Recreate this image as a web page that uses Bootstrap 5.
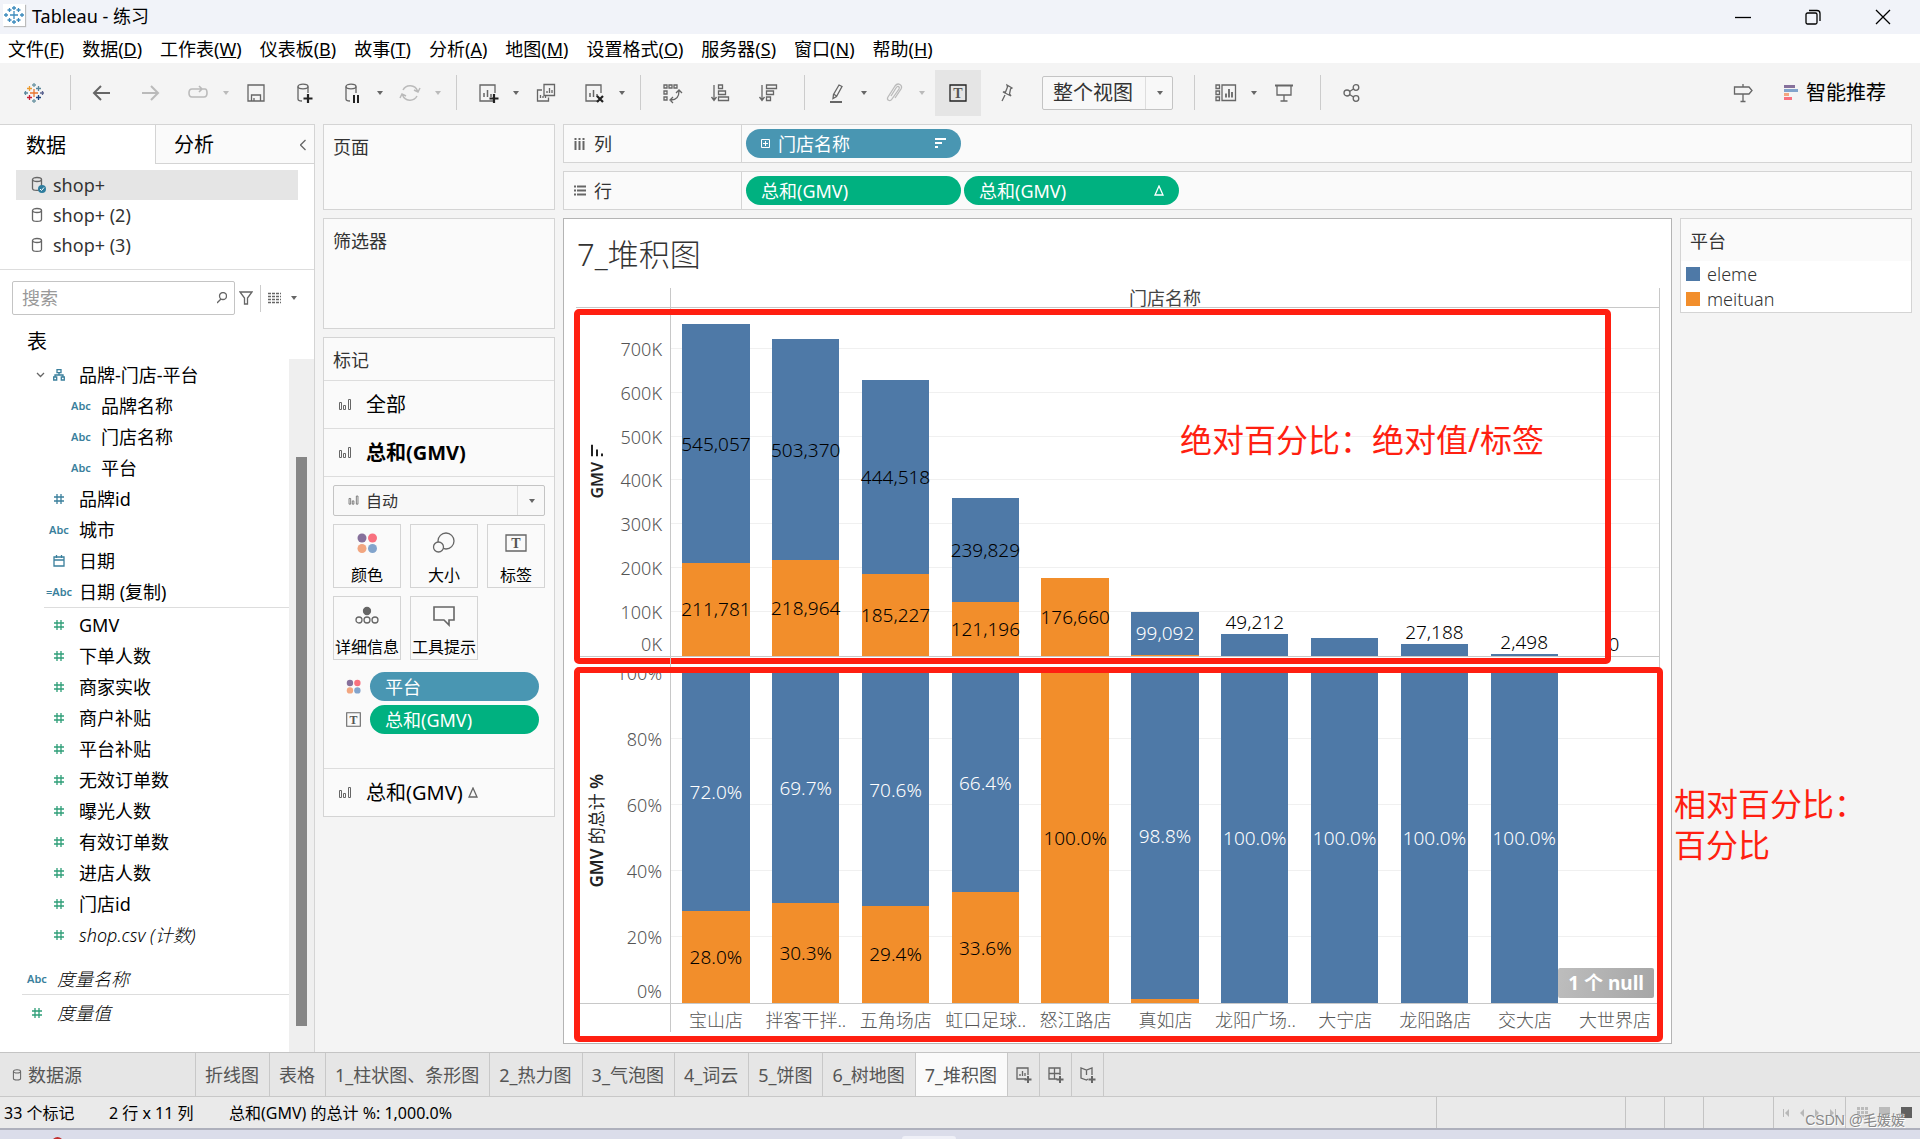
<!DOCTYPE html>
<html lang="zh-CN">
<head>
<meta charset="utf-8">
<meta name="viewport" content="width=device-width, initial-scale=1">
<title>Tableau - 练习</title>
<link rel="stylesheet" href="https://cdn.jsdelivr.net/npm/bootstrap@5.3.0/dist/css/bootstrap.min.css">
<style>
:root{--line:#d4d4d4;--blue:#4e79a7;--orange:#f28e2b;--dim:#4996b2;--mea:#00b180;--red:#ff1f11}
body{font-family:"Noto Sans","Noto Sans CJK SC",sans-serif;font-size:18px;line-height:24px;color:#000;background:#f4f4f4;overflow-x:hidden}
a{color:inherit;text-decoration:none}
button{background:none;border:0;padding:0;color:inherit}
svg{display:block;flex:none;fill:none;stroke:#666;stroke-width:1.3}
svg text{stroke:none;fill:#555;font-family:"Liberation Serif",serif;font-weight:bold;text-anchor:middle}
.i24{width:24px;height:24px}.i16{width:16px;height:16px}
.caret{width:10px;height:6px;fill:#666;stroke:none}
.off{opacity:.4}
/* window chrome */
.titlebar{height:34px;background:#f1f3f9;padding-left:3px;padding-right:2px;gap:7px;padding-bottom:6px}
.appicon{background:#fff;box-shadow:1px 1px 1px #bbb}
.wbtn{width:70px;height:34px}
.wbtn svg{stroke:#000}
.menubar{height:29px;background:#fff;padding:0 8px;gap:18px}
.toolbar-main{height:61px;padding:7px 18px 9px 11px;gap:2px}
.toolbar-main>.caret{margin-left:-2px}
.tb{width:46px;height:46px;display:flex;align-items:center;justify-content:center}
.tb.pressed{background:#e5e5e5;margin-left:6px}
.vsep{width:1px;height:35px;background:#ccc;margin:0 6px 0 11px}
.fit{width:131px;height:34px;margin:0 8px 0 11px}
.plainselect{appearance:none;width:100%;height:100%;border:1px solid #c4c4c4;border-radius:2px;background:#f8f8f8;color:#333;outline:0}
.fit select{font-size:20px;padding:0 32px 0 10px}
.selcaret{position:absolute;right:0;top:1px;bottom:1px;width:28px;border-left:1px solid #ddd;display:flex;align-items:center;justify-content:center;pointer-events:none}
/* data pane */
.datapane{width:315px;background:#fff;border-top:1px solid var(--line);border-right:1px solid var(--line);flex:none}
.ptab{height:39px;font-size:20px;padding-top:2px}
.ptab.rest{background:#fafafa;border-left:1px solid var(--line);border-bottom:1px solid var(--line);padding-left:18px}
.sources{padding:6px 16px 9px;border-bottom:1px solid #ddd;color:#333}
.sources a{height:30px;padding-left:13px;gap:6px}
.sources a.on{background:#e5e5e5}
.searchbox{width:223px;height:34px;border:1px solid #c4c4c4;border-radius:2px}
.searchbox input{border:0;outline:0;background:none;padding:0 0 0 9px;width:204px}
.searchbox input::placeholder{color:#999}
.tree a{height:31px;padding-left:44px}
.tree a.sub{padding-left:66px}
.tree a.top{padding-left:22px}
.ft{width:30px;margin-right:5px;display:flex;justify-content:center;font-size:11px;font-weight:600;color:#3a7f9c;flex:none}
.ft svg{stroke:#3a7f9c}
.ft.g svg{stroke:#2f9e78}
.scroller{width:25px;background:#efefef;padding:98px 7px 26px}
.thumb{background:#868686;height:100%;width:11px}
/* cards */
.shelfcol{width:232px;flex:none;gap:8px}
.pane{border:1px solid var(--line);background:#fafafa;color:#333}
.pane .cap{padding:10px 9px}
.mrow{height:48px;border-top:1px solid #ddd;font-size:20px;padding-left:13px;gap:13px;color:#000}
.markbtn{height:64px;border:1px solid var(--line);background:#fafafa;font-size:16px;color:#000;display:flex;flex-direction:column;align-items:center;justify-content:space-between;padding:6px 0 0;white-space:nowrap}
.pill{border-radius:15px;height:29px;color:#fff;background:var(--mea);padding:0 15px;display:flex;align-items:center}
.pill.dim{background:var(--dim)}
.pill svg{stroke:#fff}
.shelf{height:39px;padding-left:10px}
.shelf .nm{width:168px;border-right:1px solid var(--line)}
.shelf .pill{width:215px}
/* worksheet */
.sheet{background:#fff;border:1px solid #b4b4b4;padding:0 11px 7px 12px}
.sheet h1{font-size:31px;font-weight:300;line-height:40px;margin:0;padding:15px 0 14px 1px;color:#333}
.axis{width:95px;border-right:1px solid #c8c8c8;flex:none;color:#777}
.colhead{height:20px;border-bottom:1px solid #c8c8c8;border-right:1px solid #c8c8c8;color:#444}
.plot{min-height:200px;flex:1 1 0;border-bottom:1px solid #c8c8c8}
.area{border-right:1px solid #c8c8c8}
.tick{position:absolute;right:8px;transform:translateY(50%);font-weight:300;color:#555}
.grid{position:absolute;left:0;right:0;height:1px;background:#f0f0f0}
.yname{position:absolute;left:9px;top:0;bottom:0;display:flex;align-items:center;justify-content:center;writing-mode:vertical-rl;text-orientation:sideways;transform:rotate(180deg);font-size:17px;color:#222;gap:5px}
.yname b{font-weight:600}
.yname.sorted{padding-top:20px;font-size:16px}
.slot{flex:1 1 0;display:flex;flex-direction:column;justify-content:flex-end;align-items:center;position:relative}
.seg{width:75%;display:flex;align-items:center;justify-content:center;font-size:19px;font-weight:300;flex:none;white-space:nowrap}
.seg.e{background:var(--blue)}.seg.m{background:var(--orange)}
.seg.w{color:#fff}
.over{font-size:19px;font-weight:300}
.xl{flex:1 1 0;text-align:center;font-weight:300;color:#555;white-space:nowrap}
.frame{position:absolute;border:6px solid var(--red);border-radius:5px;pointer-events:none}
.frame.one{left:-2px;right:49px;top:1px;bottom:-8px}
.frame.two{left:-2px;right:-3px;top:10px;bottom:-6px}
.note{position:absolute;font-size:32px;line-height:41px;color:var(--red);white-space:nowrap}
.note.one{right:116px;top:32%}
.note.two{left:-6px;top:565px}
.nullbox{position:absolute;right:5px;bottom:5px;height:30px;padding:0 10px;border-radius:2px;color:#fff;font-size:19px;font-weight:700;background:linear-gradient(100deg,#bdbdbd,#a6a6a6)}
.legendcol{width:232px;flex:none}
.sw{width:14px;height:14px}
.lg{height:25px;gap:7px;padding-left:5px}
/* bottom */
.tabsbar{height:45px;background:#e6e6e6;border-top:1px solid #c4c4c4;border-bottom:1px solid #c8c8c8;color:#555}
.tabsbar a{border-right:1px solid #c8c8c8;padding:0 10px 0 9px;display:flex;align-items:center}
.tabsbar a.on{background:#fafafa}
.tabsbar a.src{width:196px;gap:3px}
.tabsbar a.add{width:32px;padding:0;justify-content:center}
.statusbar{height:31px;background:#eaeaea;font-size:16px}
.statusbar .cell{border-left:1px solid #c4c4c4;height:100%}
.csdn{position:absolute;right:15px;bottom:-4px;color:#888;font-family:"Liberation Sans","Noto Sans CJK SC",sans-serif;text-shadow:1px 1px 0 #fff;font-size:14px}
.taskbar{height:11px;background:#dbddea;border-top:2px solid #aeb0bc}
.taskbar i{position:absolute;display:block}
</style>
<script src="https://cdn.jsdelivr.net/npm/bootstrap@5.3.0/dist/js/bootstrap.bundle.min.js"></script>
</head>
<body class="d-flex flex-column min-vh-100">
<svg width="0" height="0" class="position-absolute">
<defs>
<symbol id="db" viewBox="0 0 16 16"><path d="M3.500 3.500v9c0 2.500 9 2.500 9 0v-9"/><ellipse cx="8" cy="3.500" rx="4.500" ry="2"/></symbol>
<symbol id="hash" viewBox="0 0 16 16"><path d="M6 3v10M10 3v10M3 6h10M3 10h10"/></symbol>
<symbol id="bars" viewBox="0 0 16 16"><path stroke-width="1" d="M2.500 5.500h2v7h-2zM6.500 8.500h2v4h-2zM11.500 2.500h2v10h-2z"/></symbol>
<symbol id="dn" viewBox="0 0 10 6"><path d="M2 1h6L5 5z"/></symbol>
<symbol id="tbox" viewBox="0 0 24 24"><path d="M4 4h16v16H4z"/><text x="12" y="17" font-size="14">T</text></symbol>
<symbol id="dots" viewBox="0 0 24 24"><g stroke="none"><circle cx="7" cy="7" r="4.500" fill="#86709b"/><circle cx="17.500" cy="7" r="4.500" fill="#f8717f"/><circle cx="7" cy="17.500" r="4.500" fill="#f2a680"/><circle cx="17.500" cy="17.500" r="4.500" fill="#82a4cc"/></g></symbol>
<symbol id="chartbox" viewBox="0 0 24 24"><path d="M17 20H4V4h15v8"/><path d="M8 16v-4M11.500 16V9M15 16v-3" stroke-width="1.500"/></symbol>
</defs>
</svg>

<header>
<div class="titlebar d-flex">
 <svg class="appicon mt-1" width="22" height="22" viewBox="0 0 22 22"><path style="stroke:#3d8bbd" d="M11 7v8M7 11h8M11 2v4M9 4h4M11 16v4M9 18h4M3 9v4M1 11h4M19 9v4M17 11h4M6.500 4v4M4.500 6h4M15.500 4v4M13.500 6h4M6.500 14v4M4.500 16h4M15.500 14v4M13.500 16h4"/></svg>
 <span class="mt-1">Tableau - 练习</span>
 <div class="ms-auto d-flex">
  <button class="wbtn" aria-label="最小化"><svg class="m-auto" width="16" height="16"><path d="M0 8.500h16"/></svg></button>
  <button class="wbtn" aria-label="还原"><svg class="m-auto" width="16" height="16"><rect x="1" y="4" width="11" height="11" rx="1.500"/><path d="M4 1.500h8q3 0 3 3V12"/></svg></button>
  <button class="wbtn" aria-label="关闭"><svg class="m-auto" width="16" height="16"><path d="M1 1l14 14M15 1L1 15"/></svg></button>
 </div>
</div>
<nav class="menubar d-flex align-items-center">
 <a href="#">文件(<u>F</u>)</a><a href="#">数据(<u>D</u>)</a><a href="#">工作表(<u>W</u>)</a><a href="#">仪表板(<u>B</u>)</a><a href="#">故事(<u>T</u>)</a><a href="#">分析(<u>A</u>)</a><a href="#">地图(<u>M</u>)</a><a href="#">设置格式(<u>O</u>)</a><a href="#">服务器(<u>S</u>)</a><a href="#">窗口(<u>N</u>)</a><a href="#">帮助(<u>H</u>)</a>
</nav>
<div class="toolbar-main d-flex align-items-center">
 <button class="tb" aria-label="Tableau"><svg class="i24" viewBox="0 0 24 24"><path style="stroke:#e8762d" d="M12 8v8M8 12h8"/><path style="stroke:#eb9a2d" d="M7.500 5v5M5 7.500h5"/><path style="stroke:#5b879b" d="M16.500 5v5M14 7.500h5M3.500 10v4M2 12h4"/><path style="stroke:#c72035" d="M7.500 14v5M5 16.500h5"/><path style="stroke:#1f457e" d="M16.500 14v5M14 16.500h5"/><path style="stroke:#7199a6" d="M12 2v4M10 4h4M12 18v4M10 20h4"/><path style="stroke:#5c6591" d="M20.500 10v4M18 12h4"/></svg></button>
 <span class="vsep"></span>
 <button class="tb" aria-label="后退"><svg class="i24" viewBox="0 0 24 24"><path d="M20 12H5M11 5l-7 7 7 7" stroke-width="2"/></svg></button>
 <button class="tb off" aria-label="前进"><svg class="i24" viewBox="0 0 24 24"><path d="M4 12h15M13 5l7 7-7 7" stroke-width="2"/></svg></button>
 <button class="tb off" aria-label="重做"><svg class="i24" viewBox="0 0 24 24"><path d="M16 8H6q-3 0-3 4t3 4h12q3 0 3-4t-2-4h-3M13 5l3 3-3 3" stroke-width="1.600"/></svg></button><svg class="caret off"><use href="#dn"/></svg>
 <button class="tb" aria-label="保存"><svg class="i24" viewBox="0 0 24 24"><path d="M4 4h16v16H4zM7.500 20v-6h9v6M10 20v-3"/></svg></button>
 <button class="tb" aria-label="新建数据源"><svg class="i24" viewBox="0 0 24 24"><ellipse cx="11" cy="5.500" rx="5" ry="2.300"/><path d="M6 5.500V18q0 2 4 2M16 5.500V12"/><path d="M16 13v9M11.500 17.500h9" stroke-width="2.200" style="stroke:#222"/></svg></button>
 <button class="tb" aria-label="暂停自动更新"><svg class="i24" viewBox="0 0 24 24"><ellipse cx="11" cy="5.500" rx="5" ry="2.300"/><path d="M6 5.500V18q0 2 4 2M16 5.500V12"/><path d="M14 14v8M18 14v8" stroke-width="2" style="stroke:#222"/></svg></button><svg class="caret"><use href="#dn"/></svg>
 <button class="tb off" aria-label="运行更新"><svg class="i24" viewBox="0 0 24 24"><path d="M5 9a8 8 0 0 1 14.500 1M19 15a8 8 0 0 1-14.500-1M22 7l-2 4-4-2M2 17l2-4 4 2" stroke-width="1.500"/></svg></button><svg class="caret off"><use href="#dn"/></svg>
 <span class="vsep"></span>
 <button class="tb" aria-label="新建工作表"><svg class="i24" viewBox="0 0 24 24"><use href="#chartbox"/><path d="M18 13v9M13.500 17.500h9" stroke-width="2.200" style="stroke:#222"/></svg></button><svg class="caret"><use href="#dn"/></svg>
 <button class="tb" aria-label="复制"><svg class="i24" viewBox="0 0 24 24"><path d="M10 3.500h10.500v11H10zM8 9H3.500v11h11v-3.500M13 12v-2M15.500 12V7M18 12V9M6.500 17v-3M9 17v-2M11.500 17v-2"/></svg></button>
 <button class="tb" aria-label="清除工作表"><svg class="i24" viewBox="0 0 24 24"><use href="#chartbox"/><path d="M15 15l6 6M21 15l-6 6" stroke-width="2.200" style="stroke:#222"/></svg></button><svg class="caret"><use href="#dn"/></svg>
 <span class="vsep"></span>
 <button class="tb" aria-label="交换行和列"><svg class="i24" viewBox="0 0 24 24"><path d="M4 4h3v3H4zM9 4h3v3H9zM14 4h3v3h-3zM4 10h3v3H4zM4 16h3v3H4zM19 10q0 9-8 9M16 12l3-3 3 3M13 16l-3 3 3 3"/></svg></button>
 <button class="tb" aria-label="升序排序"><svg class="i24" viewBox="0 0 24 24"><path d="M6 4v15M3.500 16L6 19.500 8.500 16M10.500 4h4v3.500h-4zM10.500 10h7v3.500h-7zM10.500 16h10v3.500h-10z"/></svg></button>
 <button class="tb" aria-label="降序排序"><svg class="i24" viewBox="0 0 24 24"><path d="M6 4v15M3.500 16L6 19.500 8.500 16M10.500 4h10v3.500h-10zM10.500 10h7v3.500h-7zM10.500 16h4v3.500h-4z"/></svg></button>
 <span class="vsep"></span>
 <button class="tb" aria-label="突出显示"><svg class="i24" viewBox="0 0 24 24"><path d="M15 4l3 1.500-5.500 10-3.500 2 .5-4zM9.500 13l3 2"/><path d="M6 21h12" stroke-width="2"/></svg></button><svg class="caret"><use href="#dn"/></svg>
 <button class="tb off" aria-label="组成员"><svg class="i24" viewBox="0 0 24 24"><path d="M9 15l5-8c2-3 4-1 3 1l-7 10c-2 3-6 1-4-2l7-11c3-4 8-1 6 3l-6 9"/></svg></button><svg class="caret off"><use href="#dn"/></svg>
 <button class="tb pressed" aria-label="显示标记标签"><svg class="i24" viewBox="0 0 24 24" style="stroke:#222"><use href="#tbox"/></svg></button>
 <button class="tb" aria-label="固定"><svg class="i24" viewBox="0 0 24 24"><path d="M13 4l5 3-1.500 1-1 5 1.500 2-8-4h2.500l2-5zM11 14l-3 6"/></svg></button>
 <div class="fit position-relative"><select class="plainselect" aria-label="适应"><option>整个视图</option></select><span class="selcaret"><svg class="caret"><use href="#dn"/></svg></span></div>
 <span class="vsep"></span>
 <button class="tb" aria-label="显示/隐藏卡"><svg class="i24" viewBox="0 0 24 24"><path d="M2 4h3.500v3.500H2zM2 10h3.500v3.500H2zM2 16h3.500v3.500H2zM8 4h13.500v15.500H8z"/><path d="M12 16.500v-4M15 16.500V8M18 16.500V11" stroke-width="1.800"/></svg></button><svg class="caret"><use href="#dn"/></svg>
 <button class="tb" aria-label="演示模式"><svg class="i24" viewBox="0 0 24 24"><path d="M3 4.500h18" stroke-width="2"/><path d="M5 5v9h14V5M12 14v6M8.500 20h7"/></svg></button>
 <span class="vsep"></span>
 <button class="tb" aria-label="共享"><svg class="i24" viewBox="0 0 24 24"><circle cx="7" cy="12" r="3"/><circle cx="16" cy="6.500" r="2.800"/><circle cx="16" cy="17.500" r="2.800"/><path d="M9.500 10.500l4-2.500M9.500 13.500l4 2.500"/></svg></button>
 <button class="tb ms-auto" aria-label="指南"><svg class="i24" viewBox="0 0 24 24"><path d="M3.500 6H18l3 3.500-3 3.500H3.500zM12 3v3M12 13v7M9.500 20.500h5"/></svg></button>
 <button class="d-flex align-items-center ps-3 pe-3" style="font-size:20px"><svg width="14" height="16" style="stroke:none" class="me-2"><path fill="#86709b" d="M0 0h11v3H0z"/><path fill="#82a4cc" d="M0 4h14v3H0z"/><path fill="#f2a680" d="M0 8h5v3H0z"/><path fill="#f8717f" d="M0 12h8v3H0z"/></svg>智能推荐</button>
</div>
</header>

<main class="d-flex flex-grow-1">
<aside class="datapane d-flex flex-column">
 <div class="d-flex"><a href="#" class="ptab d-flex align-items-center" style="flex:0 0 155px;padding-left:26px">数据</a><a href="#" class="ptab rest d-flex flex-fill align-items-center justify-content-between pe-2">分析<svg width="6" height="12"><path d="M5.500 1l-5 5 5 5"/></svg></a></div>
 <div class="sources">
  <a href="#" class="on d-flex align-items-center"><svg width="18" height="18" viewBox="0 0 18 18"><use href="#db" width="16" height="16"/><circle cx="13" cy="13" r="4" fill="#2f7d9e" stroke="none"/><path d="M11 13l1.500 1.500 2.500-3" style="stroke:#fff" stroke-width="1"/></svg>shop+</a>
  <a href="#" class="d-flex align-items-center"><svg width="18" height="16"><use href="#db" width="16" height="16"/></svg>shop+ (2)</a>
  <a href="#" class="d-flex align-items-center"><svg width="18" height="16"><use href="#db" width="16" height="16"/></svg>shop+ (3)</a>
 </div>
 <div class="d-flex align-items-center" style="padding:11px 0 0 12px">
  <label class="searchbox d-flex align-items-center"><input type="text" placeholder="搜索" aria-label="搜索"><svg width="10" height="12"><circle cx="6" cy="4" r="3.500"/><path d="M4 7l-4 4"/></svg></label>
  <svg class="ms-1" width="14" height="14"><path d="M1 1h12L8.500 7v6h-3V7z"/></svg>
  <span class="vsep" style="height:27px;margin:0 7px"></span>
  <svg width="13" height="12"><path stroke-dasharray="3 1" d="M0 1.500h13M0 4.500h13M0 7.500h13M0 10.500h13"/></svg>
  <svg class="caret ms-2"><use href="#dn"/></svg>
 </div>
 <div style="font-size:20px;padding:15px 27px 5px">表</div>
 <div class="d-flex flex-grow-1">
  <div class="tree flex-fill">
   <a href="#" class="d-flex align-items-center position-relative"><svg class="position-absolute" style="left:36px" width="9" height="8"><path d="M1 2l3.500 3.500L8 2"/></svg><span class="ft"><svg width="12" height="12"><path d="M4 .7h4v3H4zM.7 8h3v3h-3zM8.300 8h3v3h-3zM6 4v2M2 8V6h8v2"/></svg></span>品牌-门店-平台</a>
   <a href="#" class="sub d-flex align-items-center"><span class="ft">Abc</span>品牌名称</a>
   <a href="#" class="sub d-flex align-items-center"><span class="ft">Abc</span>门店名称</a>
   <a href="#" class="sub d-flex align-items-center"><span class="ft">Abc</span>平台</a>
   <a href="#" class="d-flex align-items-center"><span class="ft"><svg class="i16"><use href="#hash"/></svg></span>品牌id</a>
   <a href="#" class="d-flex align-items-center"><span class="ft">Abc</span>城市</a>
   <a href="#" class="d-flex align-items-center"><span class="ft"><svg width="12" height="12"><path d="M1 2h10v9H1zM1 5h10M3.500 0v3M8.500 0v3"/></svg></span>日期</a>
   <a href="#" class="d-flex align-items-center"><span class="ft">=Abc</span>日期 (复制)</a>
   <div style="margin-left:44px;border-top:1px solid #ddd;padding-bottom:1px"></div>
   <a href="#" class="d-flex align-items-center"><span class="ft g"><svg class="i16"><use href="#hash"/></svg></span>GMV</a>
   <a href="#" class="d-flex align-items-center"><span class="ft g"><svg class="i16"><use href="#hash"/></svg></span>下单人数</a>
   <a href="#" class="d-flex align-items-center"><span class="ft g"><svg class="i16"><use href="#hash"/></svg></span>商家实收</a>
   <a href="#" class="d-flex align-items-center"><span class="ft g"><svg class="i16"><use href="#hash"/></svg></span>商户补贴</a>
   <a href="#" class="d-flex align-items-center"><span class="ft g"><svg class="i16"><use href="#hash"/></svg></span>平台补贴</a>
   <a href="#" class="d-flex align-items-center"><span class="ft g"><svg class="i16"><use href="#hash"/></svg></span>无效订单数</a>
   <a href="#" class="d-flex align-items-center"><span class="ft g"><svg class="i16"><use href="#hash"/></svg></span>曝光人数</a>
   <a href="#" class="d-flex align-items-center"><span class="ft g"><svg class="i16"><use href="#hash"/></svg></span>有效订单数</a>
   <a href="#" class="d-flex align-items-center"><span class="ft g"><svg class="i16"><use href="#hash"/></svg></span>进店人数</a>
   <a href="#" class="d-flex align-items-center"><span class="ft g"><svg class="i16"><use href="#hash"/></svg></span>门店id</a>
   <a href="#" class="d-flex align-items-center fw-light"><span class="ft g"><svg class="i16"><use href="#hash"/></svg></span><i>shop.csv (计数)</i></a>
   <a href="#" class="top d-flex align-items-center fw-light" style="margin-top:13px"><span class="ft">Abc</span><i>度量名称</i></a>
   <div style="margin-left:22px;border-top:1px solid #ddd;padding-bottom:2px"></div>
   <a href="#" class="top d-flex align-items-center fw-light"><span class="ft g"><svg class="i16"><use href="#hash"/></svg></span><i>度量值</i></a>
  </div>
  <div class="scroller"><div class="thumb"></div></div>
 </div>
</aside>

<div class="d-flex flex-fill gap-2 ps-2 pe-2" style="min-width:0">
 <section class="shelfcol d-flex flex-column">
  <div class="pane" style="height:86px"><div class="cap">页面</div></div>
  <div class="pane" style="height:111px"><div class="cap">筛选器</div></div>
  <div class="pane">
   <div class="cap" style="padding-bottom:8px">标记</div>
   <div class="mrow d-flex align-items-center"><svg class="i16"><use href="#bars"/></svg><span>全部</span></div>
   <div class="mrow d-flex align-items-center fw-bold"><svg class="i16"><use href="#bars"/></svg><span>总和(GMV)</span></div>
   <div style="border-top:1px solid #ddd;padding:8px 9px 34px">
    <div class="position-relative" style="height:31px"><select class="plainselect" style="font-size:16px;padding-left:32px" aria-label="标记类型"><option>自动</option></select><svg class="position-absolute" style="left:14px;top:9px" width="13" height="13" viewBox="0 0 16 16"><use href="#bars"/></svg><span class="selcaret"><svg class="caret"><use href="#dn"/></svg></span></div>
    <div style="display:grid;grid-template-columns:68px 68px 58px;gap:8px 9px;padding-top:8px">
     <button class="markbtn"><svg class="i24"><use href="#dots"/></svg>颜色</button>
     <button class="markbtn"><svg class="i24"><circle cx="14" cy="10" r="8"/><circle cx="6.500" cy="16" r="5" fill="#fafafa"/></svg>大小</button>
     <button class="markbtn"><svg width="24" height="24"><path d="M2 4h20v16H2z"/><text x="12" y="17" font-size="14">T</text></svg>标签</button>
     <button class="markbtn"><svg class="i24"><circle cx="12" cy="8" r="3.500" fill="#666"/><circle cx="4" cy="17" r="3"/><circle cx="12" cy="17" r="3"/><circle cx="20" cy="17" r="3"/></svg>详细信息</button>
     <button class="markbtn"><svg class="i24"><path d="M2 4h20v13h-5v5l-5-5H2z" stroke-width="1.600"/></svg>工具提示</button>
    </div>
    <div class="d-flex align-items-center" style="padding:12px 6px 4px 12px;gap:8px"><svg width="17" height="17" viewBox="0 0 24 24"><use href="#dots"/></svg><button class="pill dim flex-fill">平台</button></div>
    <div class="d-flex align-items-center" style="padding:0 6px 0 12px;gap:8px"><svg width="17" height="17" viewBox="2 2 20 20"><use href="#tbox" width="24" height="24"/></svg><button class="pill flex-fill">总和(GMV)</button></div>
   </div>
   <div class="mrow d-flex align-items-center"><svg class="i16"><use href="#bars"/></svg><span>总和(GMV)</span><svg style="margin-left:-8px" width="10" height="11"><path d="M5 1L9 10H1z"/></svg></div>
  </div>
 </section>

 <section class="d-flex flex-column flex-fill gap-2" style="min-width:0">
  <div class="pane shelf d-flex align-items-center"><span class="nm d-flex align-items-center h-100 gap-2"><svg width="12" height="12"><path stroke-width="2" d="M1.500 0v2M1.500 3v9M5.500 0v2M5.500 3v9M9.500 0v2M9.500 3v9"/></svg>列</span>
   <button class="pill dim ms-1"><svg width="9" height="9"><path d="M.5.5h8v8h-8zM4.500 2v5M2 4.500h5" stroke-width="1"/></svg><span style="margin-left:8px">门店名称</span><svg class="ms-auto" width="11" height="11"><path stroke-width="2" d="M0 1h11M0 5h7M0 9h3"/></svg></button></div>
  <div class="pane shelf d-flex align-items-center"><span class="nm d-flex align-items-center h-100 gap-2"><svg width="12" height="12"><path stroke-width="2" d="M0 1.500h2M3 1.500h9M0 5.500h2M3 5.500h9M0 9.500h2M3 9.500h9"/></svg>行</span>
   <button class="pill ms-1">总和(GMV)</button><button class="pill" style="margin-left:3px">总和(GMV)<svg class="ms-auto" width="10" height="11"><path d="M5 1L9 10H1z"/></svg></button></div>

  <div class="d-flex flex-grow-1 gap-2 position-relative" style="margin-bottom:8px">
   <article class="sheet d-flex flex-column flex-fill" style="min-width:0">
    <h1>7_堆积图</h1>
    <div class="d-flex"><div class="axis colhead"></div><div class="colhead flex-fill d-flex align-items-center justify-content-center">门店名称</div></div>
    <div class="plot d-flex position-relative">
     <div class="axis position-relative" id="axis1"><div class="yname sorted"><b>GMV</b><svg style="stroke:#222" width="12" height="12"><path stroke-width="2" d="M1 0v12M6 5v7M11 9v3" transform="rotate(180 6 6)"/></svg></div></div>
     <div class="area d-flex flex-fill position-relative" id="plot1"></div>
     <div class="frame one"></div><div class="note one">绝对百分比：绝对值/标签</div>
    </div>
    <div class="d-flex flex-column position-relative" style="flex:1 1 32px">
     <div class="plot d-flex">
      <div class="axis position-relative" id="axis2"><div class="yname"><span><b>GMV</b> 的总计 <span class="fw-semibold">%</span></span></div></div>
      <div class="area d-flex flex-fill position-relative" id="plot2"><div class="nullbox d-flex align-items-center" style="z-index:2">1 个 null</div></div>
     </div>
     <div class="d-flex" style="height:32px"><div class="axis" style="height:28px"></div><div class="d-flex flex-fill align-items-center" id="names"></div></div>
     <div class="frame two"></div>
    </div>
   </article>
   <aside class="legendcol position-relative">
    <div class="pane"><div class="cap" style="padding-bottom:8px">平台</div>
     <div class="bg-white" style="padding-bottom:1px"><div class="lg d-flex align-items-center fw-light"><span class="sw" style="background:var(--blue)"></span>eleme</div><div class="lg d-flex align-items-center fw-light"><span class="sw" style="background:var(--orange)"></span>meituan</div></div></div>
    <div class="note two">相对百分比：<br>百分比</div>
   </aside>
  </div>
 </section>
</div>
</main>

<footer>
<nav class="tabsbar d-flex">
 <a href="#" class="src"><svg class="i16" viewBox="-2 -2 20 20"><use href="#db" width="16" height="16"/></svg>数据源</a><a href="#">折线图</a><a href="#">表格</a><a href="#">1_柱状图、条形图</a><a href="#">2_热力图</a><a href="#">3_气泡图</a><a href="#">4_词云</a><a href="#">5_饼图</a><a href="#">6_树地图</a><a href="#" class="on">7_堆积图</a>
 <a href="#" class="add" aria-label="新建工作表"><svg width="16" height="16"><path d="M10 12H1V1h11v7M4 9V7M6.500 9V4M9 9V6"/><path d="M12 9v7M8.500 12.500h7" stroke-width="2"/></svg></a>
 <a href="#" class="add" aria-label="新建仪表板"><svg width="16" height="16"><path d="M9 12H1V1h11v7M1 6.500h11M6.500 1v11"/><path d="M12 9v7M8.500 12.500h7" stroke-width="2"/></svg></a>
 <a href="#" class="add" aria-label="新建故事"><svg width="16" height="16"><path d="M8 12l-1.500 1L1 11V1l5.500 2L12 1v7M6.500 3v5"/><path d="M12 9v7M8.500 12.500h7" stroke-width="2"/></svg></a>
</nav>
<div class="statusbar d-flex align-items-center position-relative">
 <span style="width:105px;padding-left:4px">33 个标记</span><span style="width:120px;padding-left:4px">2 行 x 11 列</span><span style="padding-left:4px">总和(GMV) 的总计 %: 1,000.0%</span>
 <span class="cell ms-auto" style="width:189px"></span><span class="cell" style="width:39px"></span><span class="cell" style="width:39px"></span><span class="cell" style="width:70px"></span>
 <span class="cell d-flex align-items-center" style="width:72px"><svg width="58" height="10" style="stroke:none;fill:#b8b8b8" class="ms-2"><path d="M1 1h1v8H1zM7 1v8L3 5zM22 1v8l-4-4zM33 1v8l4-4zM48 1v8l4-4zM53 1h1v8h-1z"/></svg></span>
 <span class="cell d-flex align-items-center" style="width:75px;gap:11px;padding-left:11px"><svg width="11" height="11" style="stroke:none;fill:#bbb"><path d="M0 0h3v3H0zM4 0h3v3H4zM8 0h3v3H8zM0 4h3v3H0zM4 4h3v3H4zM8 4h3v3H8zM0 8h3v3H0zM4 8h3v3H4zM8 8h3v3H8z"/></svg><span style="width:11px;height:11px;background:#bbb"></span><span style="width:11px;height:11px;background:#606060"></span></span>
 <span class="csdn">CSDN @毛媛媛</span>
</div>
<div class="taskbar position-relative overflow-hidden"><i style="left:52px;bottom:-9px;width:11px;height:11px;border-radius:50%;background:#c22f2f"></i><i style="left:47%;bottom:0;width:54px;height:3px;border-radius:3px 3px 0 0;background:#eff0f7"></i></div>
</footer>

<script>
// name, eleme GMV, meituan GMV, eleme share, meituan share
const stores=[["宝山店",545057,211781,72,28],["拌客干拌..",503370,218964,69.7,30.3],["五角场店",444518,185227,70.6,29.4],["虹口足球..",239829,121196,66.4,33.6],["怒江路店",0,176660,0,100],["真如店",99092,1200,98.8,1.2],["龙阳广场..",49212,0,100,0],["大宁店",39000,0,100,0],["龙阳路店",27188,0,100,0],["交大店",2498,0,100,0],["大世界店",0,0,0,0]];
const max1=794000,max2=105;
const $=id=>document.getElementById(id);
const seg=(cls,h,t)=>h?`<div class="seg ${cls}" style="height:${h}%">${t}</div>`:"";
let p1="",p2="",names="";
stores.forEach(([n,e,m,es,ms],i)=>{
  const inside=i<6, small=i>5&&i!==7;
  p1+=`<div class="slot">${small?`<span class="over">${e.toLocaleString("en-US")}</span>`:""}${seg("e"+(i===5?" w":""),e/max1*100,inside?e.toLocaleString("en-US"):"")}${seg("m",m/max1*100,i<5?m.toLocaleString("en-US"):"")}</div>`;
  p2+=`<div class="slot">${seg("e w",es/max2*100,es.toFixed(1)+"%")}${seg("m",ms/max2*100,i<5?ms.toFixed(1)+"%":"")}</div>`;
  names+=`<span class="xl">${n}</span>`;
});
function scale(plot,axis,max,step,top,unit,bars){
  let g="",t="";
  for(let v=0;v<=top;v+=step){
    const b=v/max*100;
    if(v)g+=`<i class="grid" style="bottom:${b}%"></i>`;
    t+=`<span class="tick" style="bottom:${v?b+"%":"12px"}">${v}${unit}</span>`;
  }
  $(plot).insertAdjacentHTML("afterbegin",g+bars);
  $(axis).insertAdjacentHTML("beforeend",t);
}
scale("plot1","axis1",794,100,700,"K",p1);
scale("plot2","axis2",105,20,100,"%",p2);
$("names").innerHTML=names;
</script>
</body>
</html>
